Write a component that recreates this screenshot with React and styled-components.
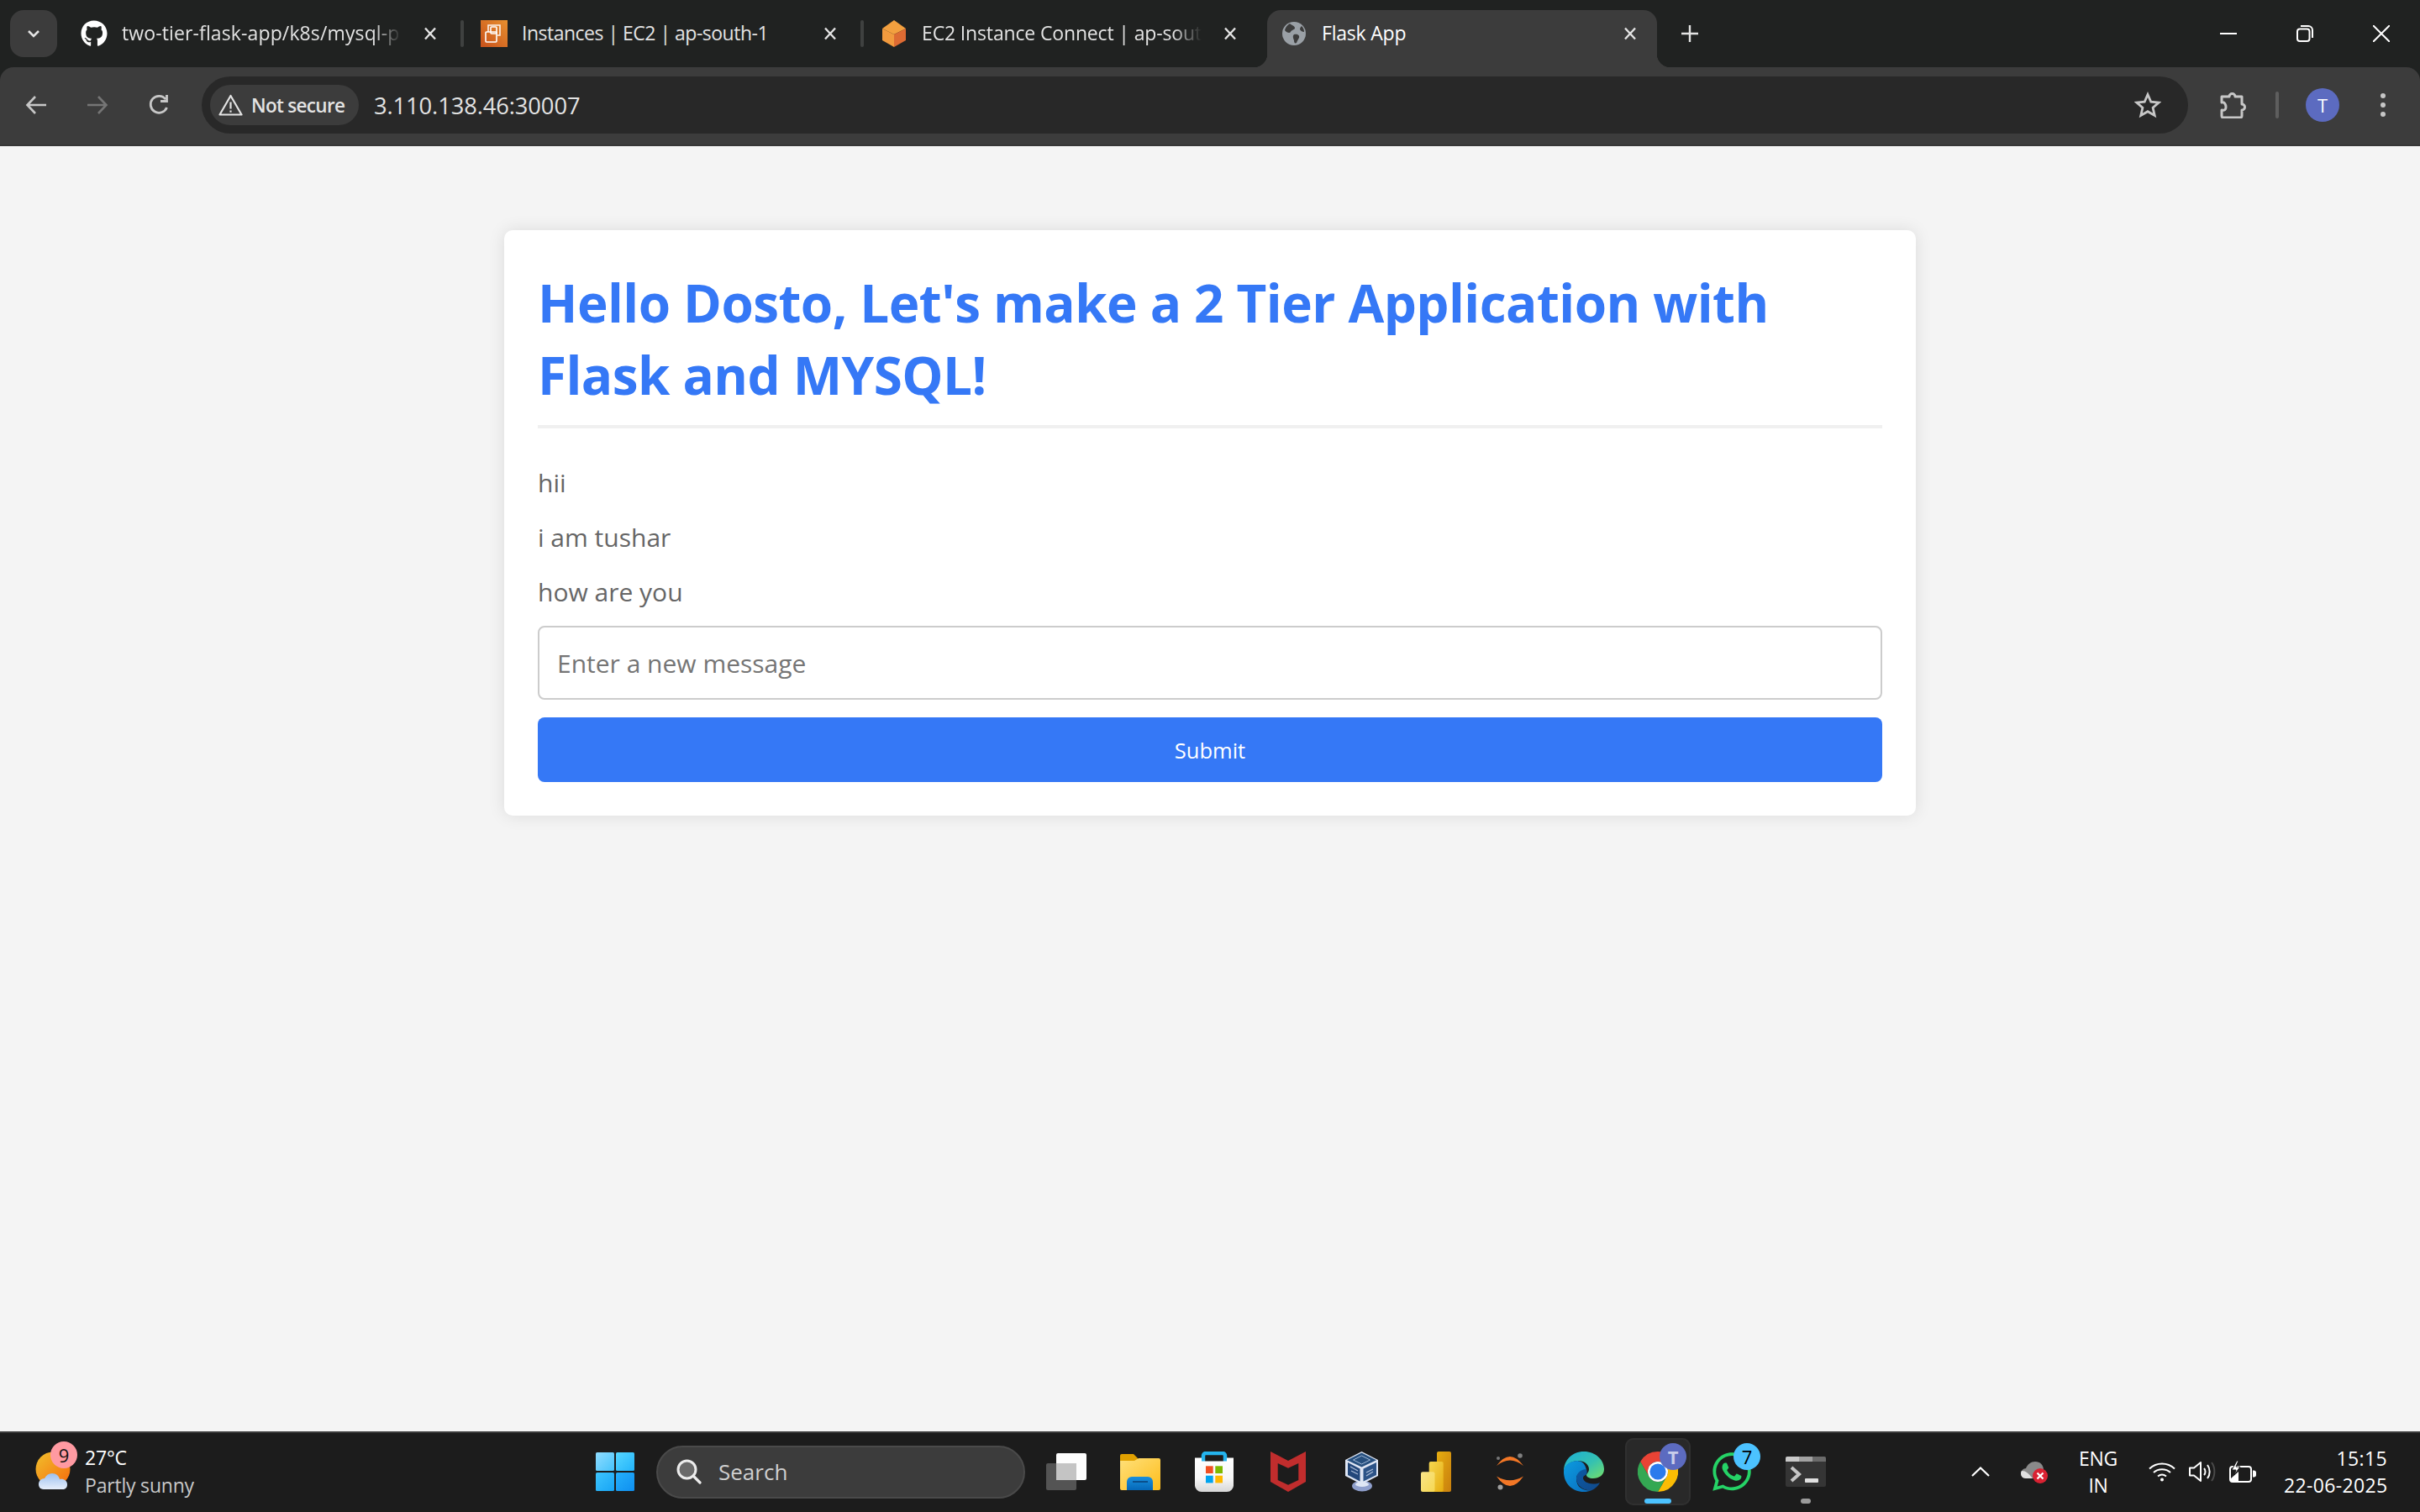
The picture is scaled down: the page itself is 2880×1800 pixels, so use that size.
import React from "react";
import styled, { createGlobalStyle } from "styled-components";
import { FaGithub, FaWhatsapp } from "react-icons/fa";

const UI = '"Open Sans", "Noto Sans", "Liberation Sans", sans-serif';

const Global = createGlobalStyle`
  html, body { margin: 0; padding: 0; width: 2880px; height: 1800px; overflow: hidden; background: #f4f4f4; }
  * { box-sizing: border-box; }
  body { font-family: ${UI}; }
`;

const Window = styled.div`
  width: 2880px;
  height: 1800px;
  display: flex;
  flex-direction: column;
`;

/* ---------- tab strip ---------- */
const TabStrip = styled.div`
  height: 80px;
  flex: none;
  background: #202221;
  display: flex;
  align-items: flex-end;
  padding-left: 12px;
`;
const TabSearch = styled.div`
  width: 56px;
  height: 56px;
  margin-bottom: 12px;
  margin-right: 12px;
  border-radius: 16px;
  background: #3c3c3c;
  display: flex;
  align-items: center;
  justify-content: center;
`;
const Tab = styled.div`
  position: relative;
  width: 464px;
  height: 68px;
  flex: none;
  padding: 12px 24px 0 16px;
  display: flex;
  align-items: flex-start;
  border-radius: 16px 16px 0 0;
  background: ${(p) => (p.$active ? "#3c3c3c" : "transparent")};
  ${(p) =>
    p.$active &&
    `
    &::before, &::after {
      content: "";
      position: absolute;
      bottom: 0;
      width: 16px;
      height: 16px;
    }
    &::before { left: -16px; background: radial-gradient(circle at 0 0, transparent 16px, #3c3c3c 16.5px); }
    &::after { right: -16px; background: radial-gradient(circle at 100% 0, transparent 16px, #3c3c3c 16.5px); }
  `}
`;
const TabIcon = styled.div`
  width: 32px;
  height: 32px;
  flex: none;
  display: flex;
  align-items: center;
  justify-content: center;
`;
const TabTitle = styled.div`
  flex: 1;
  min-width: 0;
  height: 32px;
  margin-left: 17px;
  margin-right: 26px;
  font-size: 23px;
  line-height: 30px;
  letter-spacing: ${(p) => p.$tracking}px;
  white-space: nowrap;
  color: ${(p) => (p.$active ? "#ffffff" : "#e3e3e3")};
  ${(p) =>
    p.$fade &&
    `
    -webkit-mask-image: linear-gradient(to right, #000 calc(100% - 34px), transparent 100%);
    mask-image: linear-gradient(to right, #000 calc(100% - 34px), transparent 100%);
  `}
`;
const TabClose = styled.svg`
  width: 16px;
  height: 16px;
  flex: none;
  margin-top: 8px;
`;
const TabDivider = styled.div`
  width: 4px;
  height: 32px;
  margin: 0 4px 24px;
  flex: none;
  background: #3f4140;
  border-radius: 2px;
  visibility: ${(p) => (p.$hidden ? "hidden" : "visible")};
`;
const NewTab = styled.svg`
  width: 22px;
  height: 22px;
  margin-left: 28px;
  margin-bottom: 29px;
  flex: none;
`;
const WindowControls = styled.div`
  margin-left: auto;
  padding-right: 36px;
  margin-bottom: 30px;
  display: flex;
  gap: 71px;
`;
const ControlIcon = styled.svg`
  width: 20px;
  height: 20px;
  display: block;
`;

/* ---------- toolbar ---------- */
const ToolbarBack = styled.div`
  background: #202221;
  flex: none;
`;
const Toolbar = styled.div`
  height: 94px;
  border-bottom: 2px solid #363636;
  background: #3c3c3c;
  border-radius: 16px 16px 0 0;
  display: flex;
  align-items: center;
  padding: 0 0 2px 30px;
`;
const NavGroup = styled.div`
  display: flex;
  gap: 47px;
  margin-right: 38px;
  flex: none;
`;
const NavIcon = styled.svg`
  width: 26px;
  height: 26px;
  display: block;
`;
const Omnibox = styled.div`
  width: 2364px;
  height: 68px;
  flex: none;
  border-radius: 34px;
  background: #282828;
  display: flex;
  align-items: center;
  padding: 0 32px 0 10px;
`;
const SecurityChip = styled.div`
  width: 177px;
  height: 48px;
  flex: none;
  border-radius: 24px;
  background: #3c3c3c;
  padding-left: 10px;
  display: flex;
  align-items: center;
  gap: 10px;
  font-size: 22.5px;
  font-weight: 600;
  letter-spacing: -0.7px;
  color: #e3e3e3;
  white-space: nowrap;
`;
const UrlText = styled.div`
  margin-left: 18px;
  font-size: 27.3px;
  color: #e3e3e3;
  letter-spacing: -0.1px;
`;
const StarIcon = styled.svg`
  width: 32px;
  height: 32px;
  margin-left: auto;
`;
const ExtensionIcon = styled.svg`
  width: 32px;
  height: 32px;
  margin-left: 38px;
  flex: none;
`;
const ToolbarDivider = styled.div`
  width: 4px;
  height: 32px;
  margin-left: 34px;
  border-radius: 2px;
  background: #5e5e5e;
  flex: none;
`;
const Avatar = styled.div`
  width: 40px;
  height: 40px;
  margin-left: 32px;
  border-radius: 50%;
  background: #5c6bc0;
  color: #fff;
  font-size: 22px;
  display: flex;
  align-items: center;
  justify-content: center;
  flex: none;
`;
const MenuDots = styled.div`
  margin-left: 49px;
  display: flex;
  flex-direction: column;
  gap: 5px;
  flex: none;
`;
const MenuDot = styled.span`
  width: 6px;
  height: 6px;
  border-radius: 50%;
  background: #c7c7c7;
`;

/* ---------- page ---------- */
const Page = styled.main`
  flex: 1;
  background: #f4f4f4;
  padding-top: 100px;
`;
const Card = styled.section`
  width: 1680px;
  margin: 0 auto;
  padding: 40px;
  background: #fff;
  border-radius: 10px;
  box-shadow: 0 0 20px rgba(0, 0, 0, 0.1);
`;
const Heading = styled.h1`
  margin: 0 0 43px;
  padding: 3px 0 17px;
  border-bottom: 4px solid #f0f0f0;
  font-family: ${UI};
  font-size: 62px;
  font-weight: 700;
  line-height: 86px;
  letter-spacing: -0.56px;
  color: #3578f6;
`;
const Message = styled.p`
  margin: 0 0 21px;
  font-size: 30px;
  line-height: 44px;
  color: #666;
  &:last-of-type { margin-bottom: 18px; }
`;
const MessageForm = styled.form`
  display: flex;
  flex-direction: column;
  gap: 21px;
`;
const MessageInput = styled.input`
  width: 100%;
  height: 88px;
  padding: 0 21px;
  border: 2px solid #ccc;
  border-radius: 8px;
  font-family: ${UI};
  font-size: 30px;
  background: #fff;
  outline: none;
  &::placeholder { color: #757575; opacity: 1; }
`;
const SubmitButton = styled.button`
  height: 77px;
  border: 0;
  border-radius: 8px;
  background: #3578f6;
  color: #fff;
  font-family: ${UI};
  font-size: 25.5px;
`;

/* ---------- taskbar ---------- */
const Taskbar = styled.footer`
  height: 96px;
  flex: none;
  background: #1c1c1c;
  border-top: 2px solid #3a3a3a;
  padding-bottom: 2px;
  display: flex;
  align-items: center;
  color: #fff;
`;
const WeatherWidget = styled.div`
  width: 709px;
  flex: none;
  padding-left: 42px;
  display: flex;
  align-items: center;
`;
const WeatherArt = styled.div`
  position: relative;
  width: 48px;
  height: 48px;
  flex: none;
`;
const CountBadge = styled.div`
  position: absolute;
  left: ${(p) => p.$left}px;
  top: ${(p) => p.$top}px;
  width: 32px;
  height: 32px;
  border-radius: 50%;
  background: ${(p) => p.$bg};
  color: ${(p) => p.$fg};
  font-size: ${(p) => p.$size || 22}px;
  font-weight: ${(p) => p.$weight || 400};
  display: flex;
  align-items: center;
  justify-content: center;
`;
const WeatherText = styled.div`
  margin-left: 11px;
  font-size: 23px;
  line-height: 33px;
  letter-spacing: -0.2px;
`;
const WeatherTemp = styled.div`
  color: #fff;
`;
const WeatherDesc = styled.div`
  color: #c9c9c9;
`;
const CenterGroup = styled.div`
  display: flex;
  align-items: center;
`;
const SearchBox = styled.div`
  width: 439px;
  height: 63px;
  margin: 0 5px 0 26px;
  border-radius: 32px;
  background: #3c3c3c;
  border: 2px solid #4a4a4a;
  padding-left: 22px;
  display: flex;
  align-items: center;
  gap: 20px;
  font-size: 26px;
  color: #cfcfcf;
`;
const TaskSlot = styled.div`
  position: relative;
  width: ${(p) => (p.$active ? 78 : 88)}px;
  margin: ${(p) => (p.$active ? "0 5px" : "0")};
  height: 80px;
  display: flex;
  align-items: center;
  justify-content: center;
  border-radius: 10px;
  background: ${(p) => (p.$active ? "#292929" : "transparent")};
  box-shadow: ${(p) => (p.$active ? "inset 0 0 0 2px #303030" : "none")};
`;
const RunIndicator = styled.span`
  position: absolute;
  bottom: 2px;
  left: 50%;
  transform: translateX(-50%);
  width: ${(p) => (p.$active ? 32 : 12)}px;
  height: 6px;
  border-radius: 3px;
  background: ${(p) => (p.$active ? "#4cc2ff" : "#9b9b9b")};
`;
const Tray = styled.div`
  margin-left: auto;
  padding-right: 39px;
  display: flex;
  align-items: center;
  gap: 37px;
`;
const TrayStatus = styled.div`
  display: flex;
  align-items: center;
  gap: 16px;
`;
const LangStack = styled.div`
  width: 46px;
  font-size: 23px;
  line-height: 32px;
  text-align: center;
  letter-spacing: -0.3px;
`;
const Clock = styled.div`
  width: 123px;
  margin-left: -4px;
  font-size: 23px;
  line-height: 32px;
  text-align: right;
  white-space: nowrap;
  letter-spacing: 0.35px;
`;

/* ---------- drawings ---------- */
const Close = () => (
  <TabClose viewBox="0 0 16 16" fill="none" stroke="#e3e3e3" strokeWidth="2.4">
    <path d="M2 1.500l12 13M14 1.500L2 14.500" />
  </TabClose>
);
const AwsIcon = () => (
  <svg width="32" height="32" viewBox="0 0 32 32">
    <defs>
      <linearGradient id="aws" x1="0" y1="1" x2="1" y2="0">
        <stop offset="0" stopColor="#c8511b" />
        <stop offset="1" stopColor="#e8902f" />
      </linearGradient>
    </defs>
    <rect width="32" height="32" fill="url(#aws)" />
    <g fill="none" stroke="#fff" strokeWidth="1.6">
      <path d="M9 14v-8h14v12h-3" opacity=".9" />
      <rect x="6" y="14" width="13" height="12" rx="1" />
      <rect x="12" y="8" width="7" height="8" rx="1" />
    </g>
  </svg>
);
const CubeIcon = () => (
  <svg width="30" height="32" viewBox="0 0 30 32">
    <path d="M15 0L29 10 15 17 1 10z" fill="#f3a03f" />
    <path d="M1 10l14 7v15L1 24z" fill="#f19a3e" />
    <path d="M29 10L15 17v15l14-8z" fill="#dd6b33" />
  </svg>
);
const GlobeIcon = () => (
  <svg width="30" height="30" viewBox="0 0 30 30">
    <circle cx="15" cy="15" r="14" fill="#9aa0a6" />
    <path d="M10 3c2 2 5 2 6 5 0 3-4 2-5 5-1 2-5 1-7-2 1-4 3-6 6-8zM15 16c4-1 7 1 6 4-1 2-2 3-3 6-2 1-3 0-3-3-1-3-2-5 0-7zM24 6c2 2 3 4 3 7-2 0-4-1-5-3 0-2 1-3 2-4z" fill="#3c3c3c" />
  </svg>
);
const Warning = () => (
  <svg width="29" height="26" viewBox="0 0 29 26" fill="none" stroke="#e3e3e3" strokeWidth="2.2" strokeLinejoin="round">
    <path d="M14.5 2L27.5 24.5H1.5z" />
    <path d="M14.5 9.5v8M14.5 19.5v2.2" />
  </svg>
);
const WeatherIcon = () => (
  <svg width="48" height="48" viewBox="0 0 48 48">
    <defs>
      <linearGradient id="sun" x1="0" y1="0" x2="1" y2="1">
        <stop offset="0" stopColor="#f0c02c" />
        <stop offset="1" stopColor="#f76a0c" />
      </linearGradient>
      <linearGradient id="cloud" x1="0" y1="0" x2="0" y2="1">
        <stop offset="0" stopColor="#9cc0ef" />
        <stop offset="1" stopColor="#e6eefb" />
      </linearGradient>
    </defs>
    <circle cx="21" cy="21" r="20.5" fill="url(#sun)" />
    <path d="M10 45c-5 0-6-4-6-6 0-4 3-7 7-7 2-4 5-6 9-6 5 0 8 3 9 7 5-1 9 2 9 6 0 4-2 6-6 6z" fill="url(#cloud)" />
  </svg>
);
const StartIcon = () => (
  <svg width="46" height="46" viewBox="0 0 46 46" style={{ flex: "none" }}>
    <defs>
      <linearGradient id="w1" x1="0" y1="0" x2="1" y2="1"><stop offset="0" stopColor="#8fdcff" /><stop offset="1" stopColor="#46c3fb" /></linearGradient>
      <linearGradient id="w2" x1="0" y1="0" x2="1" y2="1"><stop offset="0" stopColor="#56d6ff" /><stop offset="1" stopColor="#23b4fb" /></linearGradient>
      <linearGradient id="w3" x1="0" y1="0" x2="1" y2="1"><stop offset="0" stopColor="#3dc4fd" /><stop offset="1" stopColor="#18a5f5" /></linearGradient>
      <linearGradient id="w4" x1="0" y1="0" x2="1" y2="1"><stop offset="0" stopColor="#24b0fa" /><stop offset="1" stopColor="#0f8ff0" /></linearGradient>
    </defs>
    <rect x="0" y="0" width="22" height="22" rx="1.5" fill="url(#w1)" />
    <rect x="24" y="0" width="22" height="22" rx="1.5" fill="url(#w2)" />
    <rect x="0" y="24" width="22" height="22" rx="1.5" fill="url(#w3)" />
    <rect x="24" y="24" width="22" height="22" rx="1.5" fill="url(#w4)" />
  </svg>
);
const SearchGlyph = () => (
  <svg width="30" height="30" viewBox="0 0 30 30" style={{ flex: "none" }}>
    <circle cx="12.5" cy="12.5" r="10.5" fill="#6a6a6a" stroke="#ececec" strokeWidth="3" />
    <path d="M20 20l8 8" stroke="#ececec" strokeWidth="3.2" strokeLinecap="round" />
  </svg>
);
const TaskViewIcon = () => (
  <svg width="48" height="44" viewBox="0 0 48 44">
    <rect x="12" y="0" width="36" height="32" rx="2" fill="#fdfdfd" />
    <rect x="0" y="12" width="36" height="32" rx="2" fill="#5c5c5c" fillOpacity=".88" />
    <rect x="12" y="12" width="24" height="20" fill="#c4c4c4" />
  </svg>
);
const ExplorerIcon = () => (
  <svg width="48" height="44" viewBox="0 0 48 44">
    <defs>
      <linearGradient id="fold" x1="0" y1="0" x2="1" y2="1"><stop offset="0" stopColor="#ffe07a" /><stop offset="1" stopColor="#fdbd1c" /></linearGradient>
      <linearGradient id="tray" x1="0" y1="0" x2="0" y2="1"><stop offset="0" stopColor="#1a8fdc" /><stop offset="1" stopColor="#0568b8" /></linearGradient>
    </defs>
    <path d="M0 3a2 2 0 012-2h14l5 5v4H0z" fill="#e0a000" />
    <path d="M0 9h17l5-3h24a2 2 0 012 2v34a2 2 0 01-2 2H2a2 2 0 01-2-2z" fill="url(#fold)" />
    <path d="M8 44V34a6 6 0 016-6h19a6 6 0 016 6v10z" fill="url(#tray)" />
    <rect x="15" y="33" width="18" height="2" fill="#0a4f8c" />
  </svg>
);
const StoreIcon = () => (
  <svg width="46" height="48" viewBox="0 0 46 48">
    <defs>
      <linearGradient id="bag" x1="0" y1="0" x2="0" y2="1"><stop offset="0" stopColor="#ffffff" /><stop offset=".6" stopColor="#f7f7f7" /><stop offset="1" stopColor="#d7d7d7" /></linearGradient>
    </defs>
    <path d="M10 14V5a3 3 0 013-3h20a3 3 0 013 3v9" fill="none" stroke="#24b4ee" strokeWidth="4.5" />
    <path d="M0 7.500h8v4h30v-4h8v32a8 8 0 01-8 8.500H8a8 8 0 01-8-8.500z" fill="url(#bag)" />
    <rect x="13" y="17.300" width="8.700" height="8.700" fill="#f25022" />
    <rect x="24.300" y="17.300" width="8.700" height="8.700" fill="#7fba00" />
    <rect x="13" y="28.700" width="8.700" height="8.700" fill="#00a4ef" />
    <rect x="24.300" y="28.700" width="8.700" height="8.700" fill="#ffb900" />
  </svg>
);
const McAfeeIcon = () => (
  <svg width="42" height="48" viewBox="0 0 42 48">
    <path fillRule="evenodd" fill="#c12d2d" d="M0 0l21 11L42 0v36L21 48 0 36zM8.700 14v20L21 39.700 33.300 34V14L21 19.700z" />
  </svg>
);
const VBoxIcon = () => (
  <svg width="40" height="48" viewBox="0 0 40 48">
    <ellipse cx="20" cy="41" rx="12" ry="6.500" fill="#8f9fcc" />
    <ellipse cx="20" cy="39" rx="8" ry="3" fill="#dfe6f4" />
    <path d="M19.500 0L39 10v19L19.500 39 0 29V10z" fill="#dfe6f4" />
    <path d="M19.500 1.500L37 10.300 19.500 18.500 2 10.300z" fill="#27507f" />
    <path d="M3 13l14.500 7.500v15L3 28z" fill="#23477a" />
    <path d="M37 13L21.500 20.500v15L37 28z" fill="#2c5387" />
    <path d="M19.500 5l10 5-10 5-10-5z" fill="none" stroke="#9fb6d4" strokeWidth="1" />
    <path d="M6 18l9 5M7 23l8 4M25 25l8-4M25 29l8-5" stroke="#aebed8" strokeWidth="1.200" />
  </svg>
);
const PowerBIIcon = () => (
  <svg width="36" height="48" viewBox="0 0 36 48">
    <defs>
      <linearGradient id="pb1" x1="0" y1="0" x2="1" y2="1"><stop offset="0" stopColor="#e6ad10" /><stop offset="1" stopColor="#c87e0e" /></linearGradient>
      <linearGradient id="pb2" x1="0" y1="0" x2="1" y2="1"><stop offset="0" stopColor="#f6d751" /><stop offset="1" stopColor="#e6ad10" /></linearGradient>
      <linearGradient id="pb3" x1="0" y1="0" x2="1" y2="1"><stop offset="0" stopColor="#f9e589" /><stop offset="1" stopColor="#f6d751" /></linearGradient>
    </defs>
    <rect x="19" y="0" width="17" height="48" rx="2" fill="url(#pb1)" />
    <rect x="9.700" y="12" width="17" height="36" rx="2" fill="url(#pb2)" />
    <rect x="0" y="24.300" width="16.500" height="23.700" rx="2" fill="url(#pb3)" />
  </svg>
);
const JupyterIcon = () => (
  <svg width="34" height="44" viewBox="0 0 34 44">
    <path d="M1 15Q17-7 33 15 17 2 1 15z" fill="#f37726" />
    <path d="M1 27.500Q17 50.500 33 27.500 17 37 1 27.500z" fill="#f37726" />
    <circle cx="3" cy="6" r="2" fill="#767677" />
    <circle cx="29" cy="3" r="2.800" fill="#808080" />
    <circle cx="5.500" cy="40.500" r="3" fill="#9e9e9e" />
  </svg>
);
const EdgeIcon = () => (
  <svg width="48" height="48" viewBox="0 0 48 48">
    <defs>
      <linearGradient id="e1" x1="0" y1="0" x2="1" y2="1"><stop offset="0" stopColor="#1bb0d8" /><stop offset=".55" stopColor="#35c1b1" /><stop offset="1" stopColor="#75e069" /></linearGradient>
      <linearGradient id="e2" x1="0" y1="0" x2="1" y2="1"><stop offset="0" stopColor="#0c9ce0" /><stop offset="1" stopColor="#0a6cbd" /></linearGradient>
      <linearGradient id="e3" x1="0" y1="0" x2="1" y2="1"><stop offset="0" stopColor="#0c59a4" /><stop offset="1" stopColor="#114a8b" /></linearGradient>
    </defs>
    <path d="M0 24C0 10 10 0 24 0c14 0 24 10 24 21 0 7-6 11-13 11-5 0-8-2-8-4 0-2 3-3 3-7 0-6-6-10-13-10C9 11 1 16 0 24z" fill="url(#e1)" />
    <path d="M17 11C8 11 0 16 0 24c0 14 10 24 24 24 3 0 6-.6 9-1.800-9 .8-18-3-18-14 0-5 4-8 7-9 2-.8 5-1 5-1-1-6-4-11-10-11z" fill="url(#e2)" />
    <path d="M27 21c-7 .5-12 5-12 11 0 9 9 15 18 14.200 4-1.500 8-5 10-9.200-2 1-5 1.500-8 1.500-8 0-12-4-12-7 0-1.500 1-2.500 3-3.500 2-1 2-4.500 1-7z" fill="url(#e3)" />
  </svg>
);
const ChromeIcon = () => (
  <svg width="48" height="48" viewBox="0 0 48 48">
    <path d="M24 0a24 24 0 0120.800 12H24a12 12 0 00-10.400 18L3.200 12A24 24 0 0124 0z" fill="#ea4335" />
    <path d="M44.800 12A24 24 0 0124 48l10.400-18A12 12 0 0024 12z" fill="#fbbc04" />
    <path d="M24 48A24 24 0 013.200 12l10.400 18a12 12 0 0020.800 0z" fill="#34a853" />
    <circle cx="24" cy="24" r="12" fill="#fff" />
    <circle cx="24" cy="24" r="9.600" fill="#2b7bec" />
  </svg>
);
const TerminalIcon = () => (
  <svg width="48" height="36" viewBox="0 0 48 36">
    <rect x="0" y="0" width="48" height="36" rx="2" fill="#353535" />
    <path d="M0 2a2 2 0 012-2h14v6H0z" fill="#c9c9c9" />
    <rect x="16" y="0" width="16" height="6" fill="#a2a2a2" />
    <path d="M32 0h14a2 2 0 012 2v4H32z" fill="#6b6b6b" />
    <path d="M7 13l9 8-9 8" fill="none" stroke="#c6c6c6" strokeWidth="4" />
    <rect x="23" y="26" width="16" height="5" rx="1" fill="#e0e0e0" />
  </svg>
);
const OneDriveIcon = () => (
  <svg width="32" height="27" viewBox="0 0 32 27">
    <path d="M6 21c-4 0-6-3-6-6s3-6 6-6c2-5 6-8 11-8 6 0 10 4 10 10v10z" fill="#8a8a8a" />
    <path d="M6 21c-4 0-6-3-6-6 0-1 .3-2 1-3 5 0 8 3 13 9z" fill="#e0e0e0" />
    <circle cx="23" cy="18" r="9" fill="#d92232" />
    <path d="M19.500 14.500l7 7M26.500 14.500l-7 7" stroke="#fff" strokeWidth="2.200" />
  </svg>
);
const WifiIcon = () => (
  <svg width="32" height="24" viewBox="0 0 32 24" fill="none" stroke="#fff" strokeWidth="2">
    <path d="M1 8.500c8.500-8 21.500-8 30 0" />
    <path d="M6 13c5.500-5 14.500-5 20 0" />
    <path d="M11 17.500c3-2.500 7-2.500 10 0" />
    <circle cx="16" cy="21.500" r="2" fill="#fff" stroke="none" />
  </svg>
);
const VolumeIcon = () => (
  <svg width="32" height="26" viewBox="0 0 32 26" fill="none" stroke="#fff" strokeWidth="2">
    <path d="M1 8.500h5l8-6.500v22l-8-6.500H1z" strokeLinejoin="round" />
    <path d="M18 9c2 2 2 6 0 8" />
    <path d="M22 5c3.500 4.500 3.500 11.500 0 16" />
    <path d="M27 2c4.500 6 4.500 16 0 22" stroke="#4a4a4a" />
  </svg>
);
const BatteryIcon = () => (
  <svg width="32" height="26" viewBox="0 0 32 26" fill="none" stroke="#fff" strokeWidth="2">
    <rect x="1" y="7" width="25" height="18" rx="3" />
    <path d="M28 12.500h1.500a1.500 1.500 0 011.500 1.500v3a1.500 1.500 0 01-1.500 1.500H28" fill="#fff" />
    <path d="M2 24V21l9-8v11z" fill="#fff" stroke="none" />
    <path d="M9 0L3 11h5l-2 6 7-10H8l3-7z" fill="#fff" stroke="#1c1c1c" strokeWidth="1" />
  </svg>
);

const tabs = [
  { title: "two-tier-flask-app/k8s/mysql-p", icon: <FaGithub size={32} color="#fff" />, fade: true, tracking: 0.12 },
  { title: "Instances | EC2 | ap-south-1", icon: <AwsIcon />, tracking: -0.5 },
  { title: "EC2 Instance Connect | ap-sout", icon: <CubeIcon />, fade: true, tracking: -0.15 },
  { title: "Flask App", icon: <GlobeIcon />, active: true, tracking: -0.2 },
];

const dockIcons = [
  { key: "task", art: <TaskViewIcon /> },
  { key: "files", art: <ExplorerIcon /> },
  { key: "store", art: <StoreIcon /> },
  { key: "mcafee", art: <McAfeeIcon /> },
  { key: "vbox", art: <VBoxIcon /> },
  { key: "pbi", art: <PowerBIIcon /> },
  { key: "jupyter", art: <JupyterIcon /> },
  { key: "edge", art: <EdgeIcon /> },
];

export default function App() {
  return (
    <Window>
      <Global />
      <TabStrip>
        <TabSearch>
          <svg width="18" height="18" viewBox="0 0 18 18" fill="none" stroke="#e3e3e3" strokeWidth="2.600">
            <path d="M3 6l6 6 6-6" />
          </svg>
        </TabSearch>
        {tabs.map((t, i) => (
          <React.Fragment key={t.title}>
            <Tab $active={t.active}>
              <TabIcon>{t.icon}</TabIcon>
              <TabTitle $active={t.active} $fade={t.fade} $tracking={t.tracking}>{t.title}</TabTitle>
              <Close />
            </Tab>
            {i < tabs.length - 1 && <TabDivider $hidden={i === 2} />}
          </React.Fragment>
        ))}
        <NewTab viewBox="0 0 22 22" stroke="#e3e3e3" strokeWidth="2.400">
          <path d="M11 1v20M1 11h20" />
        </NewTab>
        <WindowControls>
          <ControlIcon viewBox="0 0 20 20" stroke="#fff" strokeWidth="2" fill="none">
            <path d="M0 10h20" />
          </ControlIcon>
          <ControlIcon viewBox="0 0 20 20" stroke="#fff" strokeWidth="2" fill="none">
            <rect x="1" y="4.500" width="14.500" height="14.500" rx="3" />
            <path d="M5 1h9a5 5 0 015 5v9" />
          </ControlIcon>
          <ControlIcon viewBox="0 0 20 20" stroke="#fff" strokeWidth="2" fill="none">
            <path d="M0 0l20 20M20 0L0 20" />
          </ControlIcon>
        </WindowControls>
      </TabStrip>

      <ToolbarBack>
        <Toolbar>
          <NavGroup>
            <NavIcon viewBox="0 0 26 26" fill="none" stroke="#c7c7c7" strokeWidth="2.600">
              <path d="M25 13H3M12 3L2.500 13 12 23" />
            </NavIcon>
            <NavIcon viewBox="0 0 26 26" fill="none" stroke="#757575" strokeWidth="2.600">
              <path d="M1 13h22M14 3l9.500 10L14 23" />
            </NavIcon>
            <NavIcon viewBox="0 0 26 26" fill="none" stroke="#c7c7c7" strokeWidth="2.800">
              <path d="M22.500 16a10 10 0 11-1.500-10" />
              <path d="M22.500 1v7.500H15" />
            </NavIcon>
          </NavGroup>
          <Omnibox>
            <SecurityChip>
              <Warning />
              Not secure
            </SecurityChip>
            <UrlText>3.110.138.46:30007</UrlText>
            <StarIcon viewBox="0 0 32 32" fill="none" stroke="#c7c7c7" strokeWidth="2.800">
              <path d="M16 3.500l3.800 8.700 9.400.9-7.100 6.200 2.100 9.200-8.200-4.800-8.200 4.800 2.100-9.200L2.800 13.100l9.400-.9z" />
            </StarIcon>
          </Omnibox>
          <ExtensionIcon viewBox="0 0 32 32" fill="none" stroke="#c7c7c7" strokeWidth="3">
            <path d="M2 6h9a3.500 3.500 0 017 0h8v9a3.500 3.500 0 010 7v7a2 2 0 01-2 2H4a2 2 0 01-2-2v-7c3.500 1 5-1 5-3.500S5.500 12 2 13z" strokeLinejoin="round" />
          </ExtensionIcon>
          <ToolbarDivider />
          <Avatar>T</Avatar>
          <MenuDots>
            <MenuDot />
            <MenuDot />
            <MenuDot />
          </MenuDots>
        </Toolbar>
      </ToolbarBack>

      <Page>
        <Card>
          <Heading>Hello Dosto, Let's make a 2 Tier Application with Flask and MYSQL!</Heading>
          <Message>hii</Message>
          <Message>i am tushar</Message>
          <Message>how are you</Message>
          <MessageForm onSubmit={(e) => e.preventDefault()}>
            <MessageInput type="text" placeholder="Enter a new message" />
            <SubmitButton type="submit">Submit</SubmitButton>
          </MessageForm>
        </Card>
      </Page>

      <Taskbar>
        <WeatherWidget>
          <WeatherArt>
            <WeatherIcon />
            <CountBadge $left={18} $top={-12} $bg="#ff9aa2" $fg="#111">9</CountBadge>
          </WeatherArt>
          <WeatherText>
            <WeatherTemp>27°C</WeatherTemp>
            <WeatherDesc>Partly sunny</WeatherDesc>
          </WeatherText>
        </WeatherWidget>
        <CenterGroup>
          <StartIcon />
          <SearchBox>
            <SearchGlyph />
            Search
          </SearchBox>
          {dockIcons.map((d) => (
            <TaskSlot key={d.key}>{d.art}</TaskSlot>
          ))}
          <TaskSlot $active>
            <ChromeIcon />
            <CountBadge $left={41} $top={6} $bg="#5c6bc0" $fg="#c8cdea" $weight={700}>T</CountBadge>
            <RunIndicator $active />
          </TaskSlot>
          <TaskSlot>
            <FaWhatsapp size={52} color="#25d366" />
            <CountBadge $left={46} $top={6} $bg="#4cc2ff" $fg="#000">7</CountBadge>
          </TaskSlot>
          <TaskSlot>
            <TerminalIcon />
            <RunIndicator />
          </TaskSlot>
        </CenterGroup>
        <Tray>
          <svg width="22" height="12" viewBox="0 0 22 12" fill="none" stroke="#fff" strokeWidth="2.200">
            <path d="M1 11L11 1.500 21 11" />
          </svg>
          <OneDriveIcon />
          <LangStack>
            ENG
            <br />
            IN
          </LangStack>
          <TrayStatus>
            <WifiIcon />
            <VolumeIcon />
            <BatteryIcon />
          </TrayStatus>
          <Clock>
            15:15
            <br />
            22-06-2025
          </Clock>
        </Tray>
      </Taskbar>
    </Window>
  );
}
